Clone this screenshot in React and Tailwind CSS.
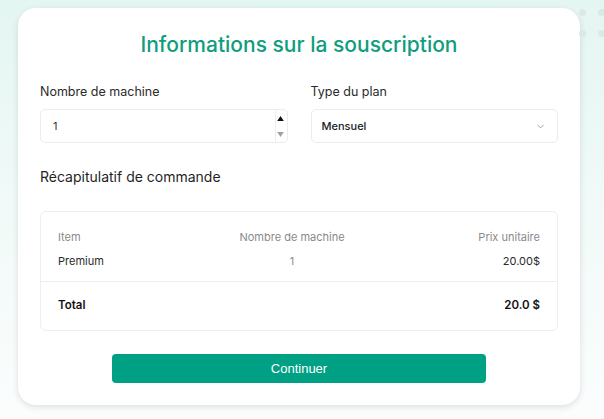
import React from "react";
import { ChevronDown } from "lucide-react";

const App = () => {
  return (
    <div className="w-[604px] h-[419px] overflow-hidden relative bg-gradient-to-b from-[#e4f6f2] via-[#f1faf8] to-[#fbfdfd] font-['Inter',sans-serif]">
      {/* decorative dots */}
      <div className="absolute top-[9px] left-[579px] grid grid-cols-2 gap-x-[12px] gap-y-[14px]">
        <span className="w-[7px] h-[7px] rounded-full bg-[#dbe9e6]" />
        <span className="w-[7px] h-[7px] rounded-full bg-[#dbe9e6]" />
        <span className="w-[7px] h-[7px] rounded-full bg-[#dbe9e6]" />
        <span className="w-[7px] h-[7px] rounded-full bg-[#dbe9e6]" />
      </div>

      <div className="pt-[8px] pl-[18px]">
        <div className="w-[562px] h-[397px] bg-white rounded-[18px] shadow-[0_2px_6px_rgba(0,0,0,0.12)] px-[22px] pt-[24px]">
          <h1 className="text-center text-[21px] font-medium text-[#0f9d7e] leading-[26px]">
            Informations sur la souscription
          </h1>

          {/* Form */}
          <div className="flex gap-[23px] mt-[25px]">
            <div className="flex-1">
              <p className="text-[12.5px] text-[#2b2b2b] leading-[18px]">Nombre de machine</p>
              <div className="mt-[8px] h-[34px] border border-[#ececf0] rounded-[5px] flex items-center">
                <span className="flex-1 pl-[12px] text-[11px] text-[#333]">1</span>
                <div className="h-full w-[11px] mr-[1px] border-l border-[#eeeeee] flex flex-col items-center justify-center gap-[11px]">
                  <svg width="7" height="5" viewBox="0 0 8 6"><path d="M4 0 L8 6 L0 6 Z" fill="#111" /></svg>
                  <svg width="7" height="5" viewBox="0 0 8 6"><path d="M0 0 L8 0 L4 6 Z" fill="#a0a0a0" /></svg>
                </div>
              </div>
            </div>
            <div className="flex-1">
              <p className="text-[12.5px] text-[#2b2b2b] leading-[18px]">Type du plan</p>
              <div className="mt-[8px] h-[34px] border border-[#ececf0] rounded-[5px] flex items-center px-[10px]">
                <span className="flex-1 text-[11px] font-medium text-[#222]">Mensuel</span>
                <ChevronDown size={11} strokeWidth={1.5} className="text-[#777] mr-[1px]" />
              </div>
            </div>
          </div>

          <h2 className="mt-[24px] text-[14px] text-[#1f1f1f] leading-[20px]">Récapitulatif de commande</h2>

          {/* Summary table */}
          <div className="mt-[24px] border border-[#eeeef0] rounded-[6px] text-[11px]">
            <div className="px-[17px] pt-[18px] pb-[13px]">
              <div className="grid grid-cols-3 text-[#8a8a8a] leading-[14px]">
                <span>Item</span>
                <span className="text-center pr-[14px]">Nombre de machine</span>
                <span className="text-right">Prix unitaire</span>
              </div>
              <div className="grid grid-cols-3 text-[#2a2a2a] leading-[14px] mt-[10px]">
                <span>Premium</span>
                <span className="text-center pr-[14px] text-[#8a8a8a]">1</span>
                <span className="text-right">20.00$</span>
              </div>
            </div>
            <div className="border-t border-[#eeeef0] px-[17px] h-[49px] flex items-center justify-between font-semibold text-[11.5px] text-[#111]">
              <span>Total</span>
              <span>20.0 $</span>
            </div>
          </div>

          <div className="flex justify-center mt-[23px]">
            <button className="w-[374px] h-[29px] bg-[#00a084] rounded-[4px] text-white text-[13px] font-['Liberation_Sans',Arial,sans-serif]">
              Continuer
            </button>
          </div>
        </div>
      </div>
    </div>
  );
};

export default App;
